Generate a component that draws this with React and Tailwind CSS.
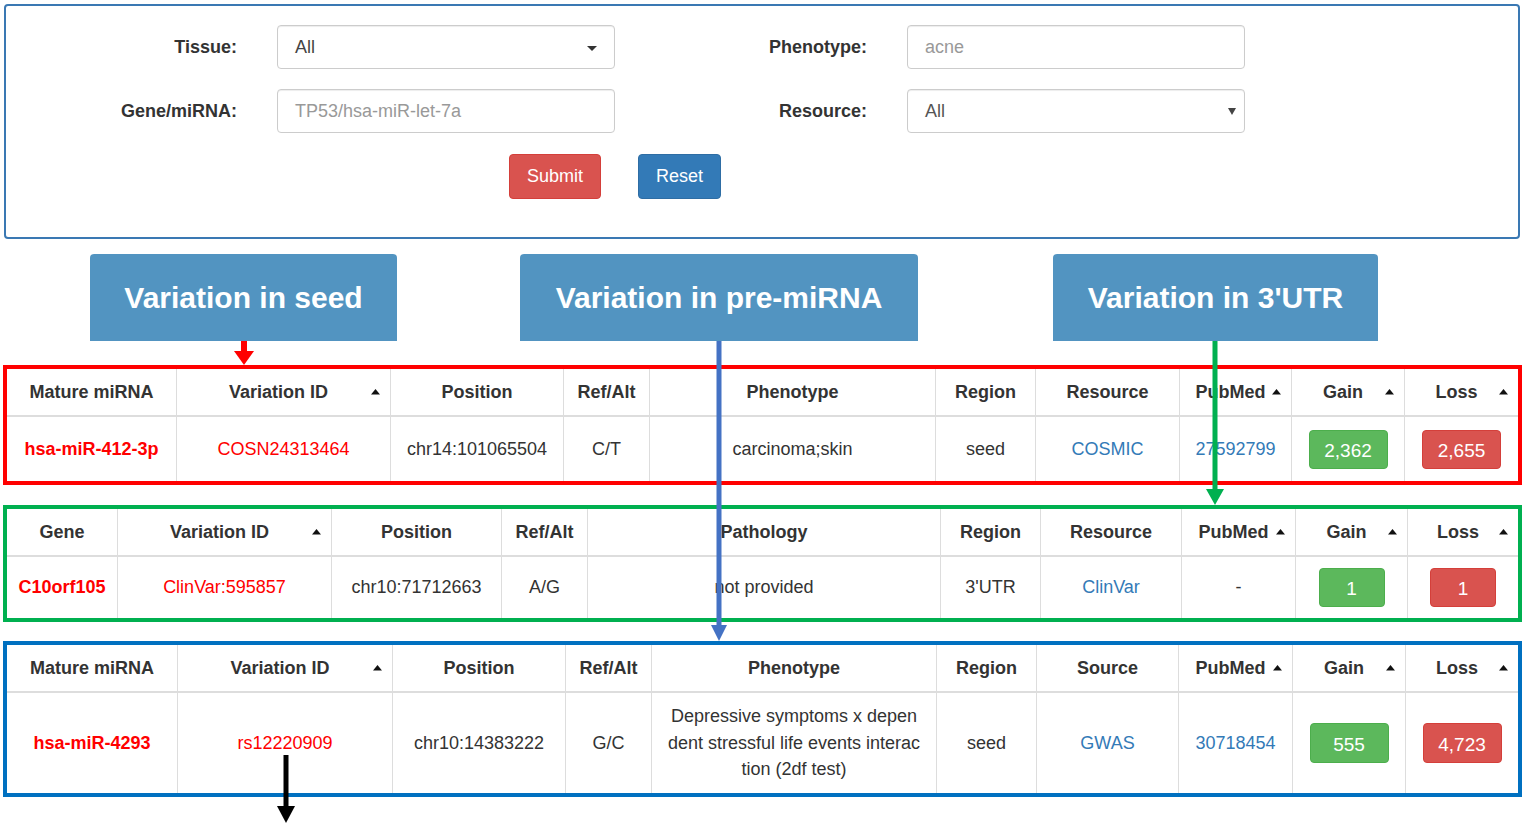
import React from "react";

const SortIcon = () => (
  <svg className="absolute right-[10px] top-1/2 -translate-y-1/2" width="9" height="6" viewBox="0 0 9 6">
    <polygon points="0,5.5 9,5.5 4.5,0" fill="#111" />
  </svg>
);

const Th = ({ children, sort, first }) => (
  <div
    className={
      "relative flex items-center justify-center font-bold text-[18px] text-[#333] whitespace-nowrap " +
      (first ? "" : "border-l border-[#dddddd] ") +
      (sort ? "pr-[10px]" : "")
    }
  >
    {children}
    {sort && <SortIcon />}
  </div>
);

const Td = ({ children, first, className = "" }) => (
  <div
    className={
      "flex items-center justify-center text-center text-[18px] text-[#333] " +
      (first ? "" : "border-l border-[#dddddd] ") +
      className
    }
  >
    {children}
  </div>
);

const Badge = ({ color, w, children }) => (
  <div
    className={
      "flex items-center justify-center h-[39px] pt-[4px] rounded-[4px] text-white text-[19px] border " +
      (color === "green" ? "bg-[#5cb85c] border-[#4cae4c] " : "bg-[#d9534f] border-[#d43f3a] ") +
      w
    }
  >
    {children}
  </div>
);

const Link = ({ children }) => <span className="text-[#337ab7]">{children}</span>;

function Field({ children, caret, native }) {
  return (
    <div className="relative flex items-center w-[338px] h-[44px] border border-[#cccccc] rounded-[4px] bg-white shadow-[inset_0_1px_1px_rgba(0,0,0,0.075)] pl-[17px] text-[18px]">
      {children}
      {caret && (
        <svg className="absolute right-[17px] top-[20px]" width="10" height="5" viewBox="0 0 10 5">
          <polygon points="0,0 10,0 5,5" fill="#333" />
        </svg>
      )}
      {native && (
        <svg className="absolute right-[8px] top-[18px]" width="8" height="7" viewBox="0 0 8 7">
          <polygon points="0,0 8,0 4,7" fill="#444" />
        </svg>
      )}
    </div>
  );
}

export default function App() {
  return (
    <div className="relative w-[1525px] h-[826px] bg-white overflow-hidden font-['Liberation_Sans',Arial,sans-serif]">
      {/* Search form */}
      <div className="ml-[4px] mt-[4px] w-[1516px] h-[235px] border-2 border-[#3a78b3] rounded-[4px] pt-[19px]">
        <div className="flex items-center h-[44px]">
          <div className="w-[231px] text-right font-bold text-[18px] text-[#333]">Tissue:</div>
          <div className="ml-[40px]">
            <Field caret>
              <span className="text-[#444]">All</span>
            </Field>
          </div>
          <div className="w-[252px] text-right font-bold text-[18px] text-[#333]">Phenotype:</div>
          <div className="ml-[40px]">
            <Field>
              <span className="text-[#999]">acne</span>
            </Field>
          </div>
        </div>
        <div className="flex items-center h-[44px] mt-[20px]">
          <div className="w-[231px] text-right font-bold text-[18px] text-[#333]">Gene/miRNA:</div>
          <div className="ml-[40px]">
            <Field>
              <span className="text-[#999]">TP53/hsa-miR-let-7a</span>
            </Field>
          </div>
          <div className="w-[252px] text-right font-bold text-[18px] text-[#333]">Resource:</div>
          <div className="ml-[40px]">
            <Field native>
              <span className="text-[#555]">All</span>
            </Field>
          </div>
        </div>
        <div className="flex mt-[21px]">
          <div className="ml-[503px] w-[92px] h-[45px] flex items-center justify-center rounded-[4px] bg-[#d9534f] border border-[#d43f3a] text-white text-[18px]">
            Submit
          </div>
          <div className="ml-[37px] w-[83px] h-[45px] flex items-center justify-center rounded-[4px] bg-[#337ab7] border border-[#2e6da4] text-white text-[18px]">
            Reset
          </div>
        </div>
      </div>

      {/* Category boxes */}
      <div className="flex mt-[15px] h-[87px]">
        <div className="ml-[90px] w-[307px] h-[87px] flex items-center justify-center bg-[#5294c1] rounded-t-[4px] text-white font-bold text-[30px]">
          Variation in seed
        </div>
        <div className="ml-[123px] w-[398px] h-[87px] flex items-center justify-center bg-[#5294c1] rounded-t-[4px] text-white font-bold text-[30px]">
          Variation in pre-miRNA
        </div>
        <div className="ml-[135px] w-[325px] h-[87px] flex items-center justify-center bg-[#5294c1] rounded-t-[4px] text-white font-bold text-[30px]">
          Variation in 3'UTR
        </div>
      </div>

      {/* Red table: seed */}
      <div className="ml-[3px] mt-[24px] w-[1519px] border-4 border-[#ff0000]">
        <div className="grid grid-cols-[169px_214px_173px_86px_286px_100px_144px_112px_113px_1fr] h-[48px] border-b-2 border-[#dddddd]">
          <Th first>Mature miRNA</Th>
          <Th sort>Variation ID</Th>
          <Th>Position</Th>
          <Th>Ref/Alt</Th>
          <Th>Phenotype</Th>
          <Th>Region</Th>
          <Th>Resource</Th>
          <Th sort>PubMed</Th>
          <Th sort>Gain</Th>
          <Th sort>Loss</Th>
        </div>
        <div className="grid grid-cols-[169px_214px_173px_86px_286px_100px_144px_112px_113px_1fr] h-[64px]">
          <Td first className="font-bold text-[#ff0000]">hsa-miR-412-3p</Td>
          <Td className="text-[#ff0000]">COSN24313464</Td>
          <Td>chr14:101065504</Td>
          <Td>C/T</Td>
          <Td>carcinoma;skin</Td>
          <Td>seed</Td>
          <Td><Link>COSMIC</Link></Td>
          <Td><Link>27592799</Link></Td>
          <Td><Badge color="green" w="w-[79px]">2,362</Badge></Td>
          <Td><Badge color="red" w="w-[79px]">2,655</Badge></Td>
        </div>
      </div>

      {/* Green table: 3'UTR */}
      <div className="ml-[3px] mt-[20px] w-[1519px] border-4 border-[#00b050]">
        <div className="grid grid-cols-[110px_214px_170px_86px_353px_100px_141px_114px_112px_1fr] h-[48px] border-b-2 border-[#dddddd]">
          <Th first>Gene</Th>
          <Th sort>Variation ID</Th>
          <Th>Position</Th>
          <Th>Ref/Alt</Th>
          <Th>Pathology</Th>
          <Th>Region</Th>
          <Th>Resource</Th>
          <Th sort>PubMed</Th>
          <Th sort>Gain</Th>
          <Th sort>Loss</Th>
        </div>
        <div className="grid grid-cols-[110px_214px_170px_86px_353px_100px_141px_114px_112px_1fr] h-[61px]">
          <Td first className="font-bold text-[#ff0000]">C10orf105</Td>
          <Td className="text-[#ff0000]">ClinVar:595857</Td>
          <Td>chr10:71712663</Td>
          <Td>A/G</Td>
          <Td>not provided</Td>
          <Td>3'UTR</Td>
          <Td><Link>ClinVar</Link></Td>
          <Td>-</Td>
          <Td><Badge color="green" w="w-[66px]">1</Badge></Td>
          <Td><Badge color="red" w="w-[66px]">1</Badge></Td>
        </div>
      </div>

      {/* Blue table: pre-miRNA */}
      <div className="ml-[3px] mt-[19px] w-[1519px] border-4 border-[#0070c0]">
        <div className="grid grid-cols-[170px_215px_173px_86px_285px_100px_142px_114px_113px_1fr] h-[48px] border-b-2 border-[#dddddd]">
          <Th first>Mature miRNA</Th>
          <Th sort>Variation ID</Th>
          <Th>Position</Th>
          <Th>Ref/Alt</Th>
          <Th>Phenotype</Th>
          <Th>Region</Th>
          <Th>Source</Th>
          <Th sort>PubMed</Th>
          <Th sort>Gain</Th>
          <Th sort>Loss</Th>
        </div>
        <div className="grid grid-cols-[170px_215px_173px_86px_285px_100px_142px_114px_113px_1fr] h-[100px]">
          <Td first className="font-bold text-[#ff0000]">hsa-miR-4293</Td>
          <Td className="text-[#ff0000]">rs12220909</Td>
          <Td>chr10:14383222</Td>
          <Td>G/C</Td>
          <Td className="leading-[26.5px] whitespace-nowrap">
            <div>
              Depressive symptoms x depen
              <br />
              dent stressful life events interac
              <br />
              tion (2df test)
            </div>
          </Td>
          <Td>seed</Td>
          <Td><Link>GWAS</Link></Td>
          <Td><Link>30718454</Link></Td>
          <Td><Badge color="green" w="w-[79px] h-[40px]">555</Badge></Td>
          <Td><Badge color="red" w="w-[79px] h-[40px]">4,723</Badge></Td>
        </div>
      </div>

      {/* Connector arrows */}
      <svg className="absolute left-0 top-0 pointer-events-none z-10" width="1525" height="826" viewBox="0 0 1525 826">
        <line x1="244" y1="341" x2="244" y2="353" stroke="#ff0000" strokeWidth="6" />
        <polygon points="234,351 254,351 244,365" fill="#ff0000" />

        <line x1="719" y1="341" x2="719" y2="627" stroke="#4472c4" strokeWidth="5" />
        <polygon points="711,625 727,625 719,641" fill="#4472c4" />

        <line x1="1215" y1="341" x2="1215" y2="491" stroke="#00b050" strokeWidth="5" />
        <polygon points="1206,489 1224,489 1215,505" fill="#00b050" />

        <line x1="286" y1="755" x2="286" y2="809" stroke="#000000" strokeWidth="5" />
        <polygon points="277,806 295,806 286,823" fill="#000000" />
      </svg>
    </div>
  );
}
